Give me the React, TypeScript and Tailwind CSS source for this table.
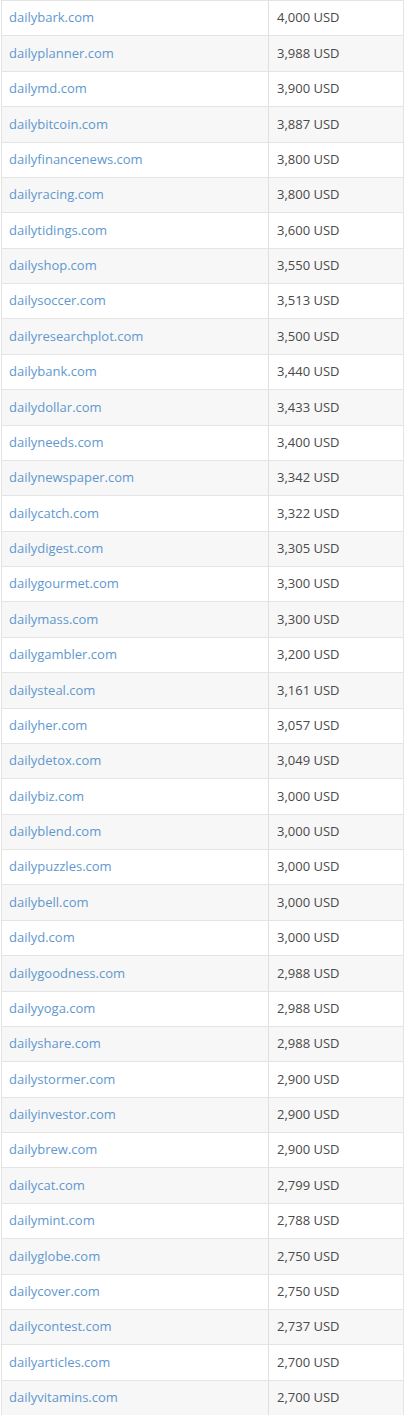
const rows: [string, string][] = [
  ["dailybark.com", "4,000"],
  ["dailyplanner.com", "3,988"],
  ["dailymd.com", "3,900"],
  ["dailybitcoin.com", "3,887"],
  ["dailyfinancenews.com", "3,800"],
  ["dailyracing.com", "3,800"],
  ["dailytidings.com", "3,600"],
  ["dailyshop.com", "3,550"],
  ["dailysoccer.com", "3,513"],
  ["dailyresearchplot.com", "3,500"],
  ["dailybank.com", "3,440"],
  ["dailydollar.com", "3,433"],
  ["dailyneeds.com", "3,400"],
  ["dailynewspaper.com", "3,342"],
  ["dailycatch.com", "3,322"],
  ["dailydigest.com", "3,305"],
  ["dailygourmet.com", "3,300"],
  ["dailymass.com", "3,300"],
  ["dailygambler.com", "3,200"],
  ["dailysteal.com", "3,161"],
  ["dailyher.com", "3,057"],
  ["dailydetox.com", "3,049"],
  ["dailybiz.com", "3,000"],
  ["dailyblend.com", "3,000"],
  ["dailypuzzles.com", "3,000"],
  ["dailybell.com", "3,000"],
  ["dailyd.com", "3,000"],
  ["dailygoodness.com", "2,988"],
  ["dailyyoga.com", "2,988"],
  ["dailyshare.com", "2,988"],
  ["dailystormer.com", "2,900"],
  ["dailyinvestor.com", "2,900"],
  ["dailybrew.com", "2,900"],
  ["dailycat.com", "2,799"],
  ["dailymint.com", "2,788"],
  ["dailyglobe.com", "2,750"],
  ["dailycover.com", "2,750"],
  ["dailycontest.com", "2,737"],
  ["dailyarticles.com", "2,700"],
  ["dailyvitamins.com", "2,700"],
];

export default function App() {
  return (
    <div className="w-[405px] bg-white font-['Open_Sans',sans-serif] text-[13px]">
      <div className="border-x border-t border-[#e4e4e4] mx-[1px]">
        {rows.map(([domain, price], i) => (
          <div
            key={domain}
            className={`grid grid-cols-[267px_1fr] h-[35.375px] border-b border-[#e4e4e4] ${
              i % 2 === 1 ? "bg-[#f7f7f7]" : "bg-white"
            }`}
          >
            <div className="flex items-center pl-[7px] border-r border-[#e0e0e0]">
              <a href="#" className="text-[#5f98cf]">
                {domain}
              </a>
            </div>
            <div className="flex items-center pl-[8px] text-[#4a4a4a]">{price} USD</div>
          </div>
        ))}
      </div>
    </div>
  );
}
